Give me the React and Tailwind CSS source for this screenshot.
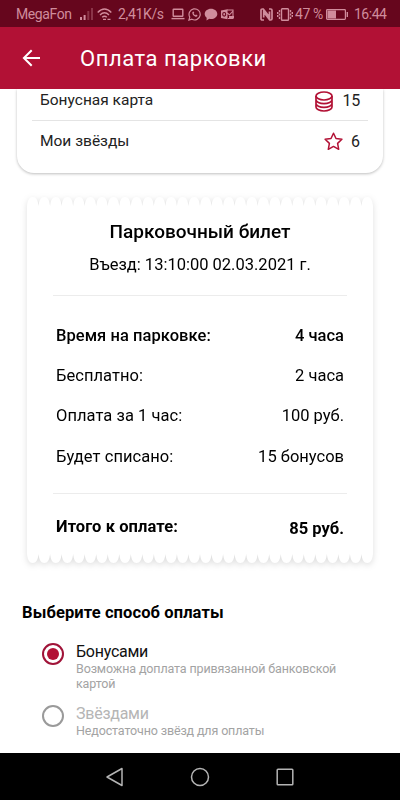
import React from 'react';

const SCALLOPS = 30;
const STEP = 346 / SCALLOPS;

// Row of rounded teeth pointing downwards; flipped for the top edge.
const teeth = Array.from({ length: SCALLOPS }, (_, i) => {
  const x = i * STEP;
  return `M${x} 0 V1 C${x + 0.6} 7 ${x + 2.6} 10 ${x + STEP / 2} 10 S${x + STEP - 0.6} 7 ${x + STEP} 1 V0Z`;
}).join(' ');

function Edge({ className }) {
  return (
    <svg className={className} width="346" height="10" viewBox="0 0 346 10" fill="#fff">
      <path d={teeth} />
    </svg>
  );
}

function StatusBar() {
  return (
    <header className="flex h-[27px] items-center bg-[#66061d] pt-px pl-4 text-[14px] leading-[26px] text-[#d08c9c]">
      <span className="w-[64px] tracking-[-0.4px]">MegaFon</span>
      <svg width="14" height="13" viewBox="0 0 14 13" fill="currentColor">
        <rect x="0" y="9" width="2" height="3" />
        <rect x="3.6" y="7" width="2" height="5" />
        <rect x="7.3" y="3" width="2" height="9" opacity=".35" />
        <rect x="11" y="0" width="2" height="12" opacity=".35" />
      </svg>
      <svg className="ml-[3px]" width="15" height="13" viewBox="0 0 15 13" fill="none" stroke="currentColor" strokeWidth="1.4">
        <path d="M.7 4.5Q7.5-2.6 14.3 4.5M3 7Q7.5 2.5 12 7M5.2 9.3q2.3-2.2 4.6 0" />
        <path d="M6 11.4h3M10.5 11.4h3" />
      </svg>
      <span className="ml-[6px] w-[53px] tracking-[-0.35px]">2,41K/s</span>
      <svg width="14" height="12" viewBox="0 0 14 12" fill="none" stroke="currentColor" strokeWidth="1.4">
        <rect x="2.2" y="1.2" width="9.6" height="7" rx=".5" />
        <path d="M.5 10.6h13" />
      </svg>
      <svg className="ml-[3px]" width="13" height="13" viewBox="0 0 14 14" fill="none" stroke="currentColor" strokeWidth="1.3">
        <path d="M1 13l.9-3.2a6 6 0 1 1 2.3 2.3Z" />
        <path d="M4.8 4.2c-.8 2.6 2.4 5.8 5 5l.4-1.4-1.6-.8-.8.8C7 7.500 6.400 6.800 6 6l.8-.7L6 3.800Z" fill="currentColor" stroke="none" />
      </svg>
      <svg className="ml-[3px]" width="14" height="13" viewBox="0 0 14 13" fill="currentColor">
        <path d="M7 .8c3.600 0 6.300 2.300 6.300 5.200S10.600 11 7 11c-.6 0-1.200 0-1.700-.2L2.500 12.500l.2-2.800C1.400 8.800.7 7.500.7 6 .7 3.100 3.400.8 7 .8Z" />
      </svg>
      <svg className="ml-[3px]" width="13" height="11" viewBox="0 0 13 11" fill="none" stroke="currentColor" strokeWidth="1.1">
        <path d="M6 1h6v8.500H7M6 4l2.500 1.800L12 2" />
        <path d="M0 1.500 6.500.3v10L0 9Z" fill="currentColor" stroke="none" />
        <ellipse cx="3.200" cy="5.300" rx="1.500" ry="1.800" stroke="#66061d" />
        <path d="M8 8h5" strokeWidth="2" />
      </svg>
      <svg className="ml-[26px]" width="13" height="13" viewBox="0 0 13 13" fill="none" stroke="currentColor">
        <path d="M4 12H2.300Q1 12 1 10.700V2.300Q1 1 2.300 1h1L9.500 9V3.500M9 1h1.700Q12 1 12 2.300v8.400Q12 12 10.700 12h-1L3.700 4v5.500" strokeWidth="1.700" />
      </svg>
      <svg className="ml-[4px]" width="16" height="13" viewBox="0 0 16 13" fill="none" stroke="currentColor" strokeWidth="1.400">
        <rect x="4.500" y=".8" width="7" height="11.400" rx=".8" />
        <path d="M2.500 2v9M13.500 2v9" strokeDasharray="2.200 1.200" />
        <path d="M.7 4v5M15.300 4v5" strokeDasharray="2 1" />
      </svg>
      <span className="ml-[2px] w-[30px] whitespace-nowrap tracking-[-0.4px]">47 %</span>
      <svg className="ml-px" width="22" height="11" viewBox="0 0 22 11" fill="none" stroke="currentColor">
        <rect x=".6" y=".6" width="18.800" height="9.800" rx=".8" strokeWidth="1.200" />
        <rect x="1.500" y="1.500" width="8.500" height="8" fill="currentColor" stroke="none" />
        <path d="M21.300 3v5" strokeWidth="1.400" />
      </svg>
      <span className="ml-[6px] whitespace-nowrap tracking-[-0.5px]">16:44</span>
    </header>
  );
}

function TitleBar() {
  return (
    <div className="flex h-[62px] items-center bg-[#b21135] pl-[22px] text-white">
      <svg width="19" height="18" viewBox="0 0 19 18" fill="none" stroke="#fff" strokeWidth="2">
        <path d="M18 9H2M9.700 1.200 1.900 9l7.800 7.800" />
      </svg>
      <h1 className="mt-[2px] ml-[39px] whitespace-nowrap text-[22px] leading-[56px] tracking-[0.55px]">Оплата парковки</h1>
    </div>
  );
}

function CoinsIcon() {
  return (
    <svg width="18" height="21" viewBox="0 0 18 21" fill="none" stroke="#b21135" strokeWidth="1.700">
      <ellipse cx="9" cy="5" rx="8" ry="4" />
      <path d="M1 5v11c0 2.200 3.600 4 8 4s8-1.800 8-4V5M1 8.700c0 2.200 3.600 4 8 4s8-1.800 8-4M1 12.400c0 2.200 3.600 4 8 4s8-1.800 8-4" />
    </svg>
  );
}

function StarIcon() {
  return (
    <svg width="19" height="19" viewBox="0 0 19 19" fill="none" stroke="#b21135" strokeWidth="1.500" strokeLinejoin="round">
      <path d="m9.500 1.200 2.500 5.300 5.900.8-4.300 4.100 1.100 5.900-5.200-2.900-5.200 2.900 1.100-5.900L1.100 7.300 7 6.500Z" />
    </svg>
  );
}

function BalanceCard() {
  return (
    <section className="mx-[17px] h-[84px] rounded-b-[17px] bg-white px-[15px] text-[16px] text-[#222] shadow-[0_1px_3px_rgba(0,0,0,0.26)]">
      <div className="flex h-[32px] items-center border-b border-[#e4e4e4] px-[8px] pb-[7px]">
        <span className="flex-1 text-[15.500px]">Бонусная карта</span>
        <CoinsIcon />
        <span className="ml-[9px] tracking-[-0.2px]">15</span>
      </div>
      <div className="flex h-[41px] items-center px-[8px]">
        <span className="flex-1 text-[15.500px]">Мои звёзды</span>
        <StarIcon />
        <span className="ml-[8px]">6</span>
      </div>
    </section>
  );
}

const details = [
  ['Время на парковке:', '4 часа'],
  ['Бесплатно:', '2 часа'],
  ['Оплата за 1 час:', '100 руб.'],
  ['Будет списано:', '15 бонусов'],
];

function Ticket() {
  return (
    <section className="mx-[27px] mt-[24px] flex flex-col drop-shadow-[0_2px_3px_rgba(0,0,0,0.13)]">
      <Edge className="block rotate-180" />
      <div className="h-[346px] bg-white px-[26px] text-black">
        <div className="flex h-[89px] flex-col items-center border-b border-[#ececec] pt-[11px]">
          <h2 className="text-[19px] leading-[28px] font-medium whitespace-nowrap">Парковочный билет</h2>
          <p className="mt-[6px] text-[16.500px] leading-[26px] whitespace-nowrap">Въезд: 13:10:00 02.03.2021 г.</p>
        </div>
        <dl className="h-[198px] border-b border-[#ececec] pt-[20px] pr-[3px] pl-[3px] text-[16.500px]">
          {details.map(([label, value], i) => (
            <div key={label} className={`flex h-[40.300px] items-center justify-between ${i === 0 ? 'font-medium' : ''}`}>
              <dt className="tracking-[0.05px]">{label}</dt>
              <dd>{value}</dd>
            </div>
          ))}
        </dl>
        <div className="flex items-start justify-between pt-[20px] pr-[3px] pl-[3px] text-[16.500px] leading-[26px] font-bold">
          <span className="tracking-[0.08px]">Итого к оплате:</span>
          <span className="mt-[2px]">85 руб.</span>
        </div>
      </div>
      <Edge className="block" />
    </section>
  );
}

function Option({ title, note, selected, className }) {
  return (
    <label className={`flex items-start ${className}`}>
      <span className={`mt-px flex size-[22px] shrink-0 items-center justify-center rounded-full border-2 ${selected ? 'border-[#a01338]' : 'border-[#9a9a9a]'}`}>
        {selected && <span className="size-[12px] rounded-full bg-[#b21135]" />}
      </span>
      <span className="ml-[12px] flex w-[270px] flex-col">
        <span className={`text-[16px] leading-[20px] tracking-[-0.25px] ${selected ? 'text-[#111]' : 'text-[#b5b5b5]'}`}>{title}</span>
        <span className="text-[12.500px] leading-[14.500px] tracking-[-0.14px] text-[#a3a3a3]">{note}</span>
      </span>
    </label>
  );
}

function NavBar() {
  return (
    <nav className="flex h-[47px] items-center bg-black pl-[106px]">
      <svg width="18" height="20" viewBox="0 0 18 20" fill="none" stroke="#b4b4b4" strokeWidth="1.500" strokeLinejoin="round">
        <path d="M16 1.500v17L1 10Z" />
      </svg>
      <svg className="ml-[66px]" width="20" height="20" viewBox="0 0 20 20" fill="none" stroke="#b4b4b4" strokeWidth="1.500">
        <circle cx="10" cy="10" r="8.500" />
      </svg>
      <svg className="ml-[66px]" width="18" height="18" viewBox="0 0 18 18" fill="none" stroke="#b4b4b4" strokeWidth="1.500">
        <rect x="1.200" y="1.200" width="15.600" height="15.600" rx=".8" />
      </svg>
    </nav>
  );
}

export default function App() {
  return (
    <div className="flex h-[800px] w-[400px] flex-col overflow-hidden bg-white font-['Roboto','Noto_Sans',sans-serif]">
      <StatusBar />
      <TitleBar />
      <main className="flex-1 overflow-hidden">
        <BalanceCard />
        <Ticket />
        <section className="pt-[38px] pl-[22px]">
          <h2 className="text-[16.500px] leading-[24px] font-bold tracking-[0.1px] text-black">Выберите способ оплаты</h2>
          <Option className="mt-[17px] ml-[20px]" title="Бонусами" note="Возможна доплата привязанной банковской картой" selected />
          <Option className="mt-[13px] ml-[20px]" title="Звёздами" note="Недостаточно звёзд для оплаты" />
        </section>
      </main>
      <NavBar />
    </div>
  );
}
